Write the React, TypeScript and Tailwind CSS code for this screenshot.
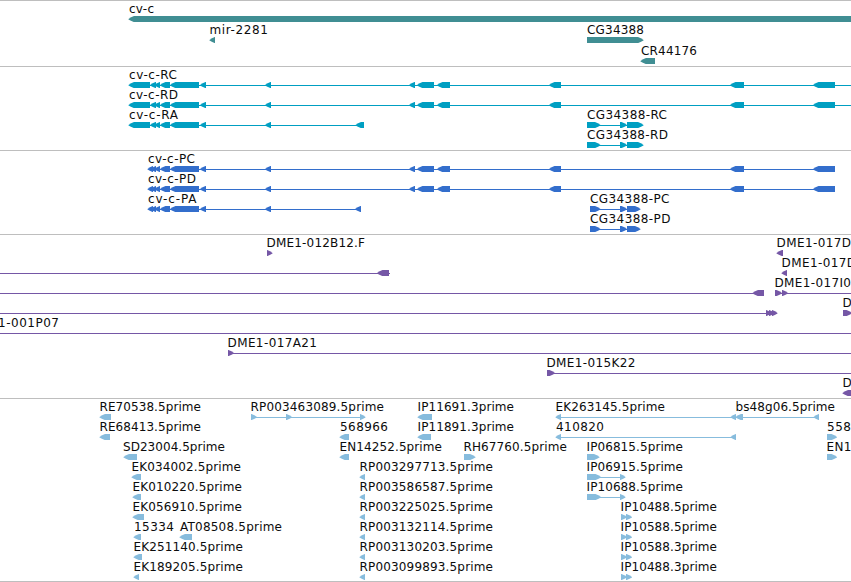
import React from "react";

type Label = [text: string, x: number, end: number];
type Arrow = [dir: "l" | "r", start: number, end: number];
interface Row {
  labels?: Label[];
  lines?: [number, number][];
  arrows?: Arrow[];
}
interface TrackData {
  name: string;
  color: string;
  height: number;
  pitch: number;
  rows: Row[];
}

const tail: Arrow[] = [
  ["l", 160, 170],
  ["l", 170, 199],
  ["l", 200, 206],
  ["l", 265, 271],
];
const distal: Arrow[] = [
  ["l", 409, 415],
  ["l", 417, 434],
  ["l", 437, 450],
  ["l", 549, 561],
  ["l", 730, 744],
  ["l", 813, 835],
];
const rnaHead: Arrow[] = [["l", 128.5, 150], ["l", 150, 156], ["l", 154.5, 160]];
const cdsHead: Arrow[] = [["l", 147.5, 153], ["l", 150.5, 156], ["l", 154.5, 160]];
const rnaShort: Arrow[] = [["r", 587, 600.5], ["r", 620, 627], ["r", 627, 643.5]];
const cdsShort: Arrow[] = [["r", 590, 600.5], ["r", 620, 627], ["r", 627, 640.5]];
const pair: Arrow[] = [["r", 621, 627], ["r", 626, 632]];

const tracks: TrackData[] = [
  {
    name: "gene",
    color: "#408e93",
    height: 65,
    pitch: 21,
    rows: [
      { labels: [["cv-c", 129, 154]], arrows: [["l", 128.5, 860]] },
      {
        labels: [["mir-2281", 209.5, 268], ["CG34388", 587, 644]],
        arrows: [["l", 209.5, 215], ["r", 587, 643.5]],
      },
      { labels: [["CR44176", 641, 697]], arrows: [["l", 640.5, 655]] },
    ],
  },
  {
    name: "transcript",
    color: "#009fc2",
    height: 83,
    pitch: 20,
    rows: [
      { labels: [["cv-c-RC", 129, 177]], lines: [[150, 851]], arrows: [...rnaHead, ...tail, ...distal] },
      { labels: [["cv-c-RD", 129, 178]], lines: [[150, 851]], arrows: [...rnaHead, ...tail, ...distal] },
      {
        labels: [["cv-c-RA", 129, 178], ["CG34388-RC", 587, 667]],
        lines: [[150, 358], [599, 628]],
        arrows: [...rnaHead, ...tail, ["l", 355.5, 364], ...rnaShort],
      },
      { labels: [["CG34388-RD", 587, 668]], lines: [[599, 628]], arrows: rnaShort },
    ],
  },
  {
    name: "cds",
    color: "#336ecc",
    height: 83,
    pitch: 20,
    rows: [
      { labels: [["cv-c-PC", 148, 195]], lines: [[150, 835]], arrows: [...cdsHead, ...tail, ...distal] },
      { labels: [["cv-c-PD", 148, 196]], lines: [[150, 835]], arrows: [...cdsHead, ...tail, ...distal] },
      {
        labels: [["cv-c-PA", 148, 196.5], ["CG34388-PC", 590, 669.5]],
        lines: [[150, 358], [599, 628]],
        arrows: [...cdsHead, ...tail, ["l", 355, 361], ...cdsShort],
      },
      { labels: [["CG34388-PD", 590, 670.5]], lines: [[599, 628]], arrows: cdsShort },
    ],
  },
  {
    name: "bac",
    color: "#7557a6",
    height: 163,
    pitch: 20,
    rows: [
      {
        labels: [["DME1-012B12.F", 266.5, 365], ["DME1-017D", 776.5, 851]],
        arrows: [["r", 267, 272.5], ["l", 776.5, 783]],
      },
      {
        labels: [["DME1-017D", 781.5, 856]],
        lines: [[0, 390]],
        arrows: [["l", 377, 389], ["l", 781.5, 787]],
      },
      {
        labels: [["DME1-017I0", 774.5, 851]],
        lines: [[0, 764], [775, 851]],
        arrows: [["l", 752.5, 764], ["r", 775, 782], ["r", 782, 788]],
      },
      {
        labels: [["D", 842.5, 852]],
        lines: [[0, 777]],
        arrows: [["r", 766, 771.5], ["r", 769, 774.5], ["r", 772, 777.5], ["r", 843, 852]],
      },
      { labels: [["1-001P07", -2, 59]], lines: [[0, 851]] },
      { labels: [["DME1-017A21", 227.5, 317]], lines: [[228, 851]], arrows: [["r", 228, 234]] },
      { labels: [["DME1-015K22", 546.5, 635.5]], lines: [[547, 851]], arrows: [["r", 547, 555]] },
      { labels: [["D", 842.5, 852]], arrows: [["l", 842.5, 856]] },
    ],
  },
  {
    name: "est",
    color: "#87bcdd",
    height: 182,
    pitch: 20,
    rows: [
      {
        labels: [
          ["RE70538.5prime", 99.5, 201],
          ["RP003463089.5prime", 250.5, 384],
          ["IP11691.3prime", 417.5, 514],
          ["EK263145.5prime", 555.5, 665],
          ["bs48g06.5prime", 735.5, 835],
        ],
        lines: [[251, 365], [556, 819]],
        arrows: [
          ["l", 99.5, 111], ["r", 251, 257], ["r", 286, 292], ["r", 360, 365.5], ["l", 417.5, 432],
          ["l", 555.5, 561], ["l", 730.5, 736], ["l", 735.5, 743], ["l", 813.5, 819],
        ],
      },
      {
        labels: [
          ["RE68413.5prime", 99.5, 201],
          ["568966", 340, 388],
          ["IP11891.3prime", 417.5, 514],
          ["410820", 556, 604],
          ["558", 827, 851],
        ],
        lines: [[556, 736]],
        arrows: [
          ["l", 99.5, 110], ["l", 339.5, 349], ["l", 417.5, 431],
          ["l", 555.5, 561], ["l", 730.5, 736], ["r", 827, 837],
        ],
      },
      {
        labels: [
          ["SD23004.5prime", 123, 225],
          ["EN14252.5prime", 339.5, 442],
          ["RH67760.5prime", 463.5, 567],
          ["IP06815.5prime", 586.5, 683],
          ["EN1", 826.5, 851.5],
        ],
        arrows: [["l", 123.5, 137], ["l", 339.5, 349], ["r", 464, 475.5], ["r", 587, 599.5], ["r", 827, 837]],
      },
      {
        labels: [["EK034002.5prime", 131.5, 241], ["RP003297713.5prime", 359.5, 493], ["IP06915.5prime", 586.5, 683]],
        lines: [[599, 625]],
        arrows: [["l", 131.5, 141], ["l", 359.5, 365], ["r", 587, 601], ["r", 620, 625.5]],
      },
      {
        labels: [["EK010220.5prime", 132.5, 242], ["RP003586587.5prime", 359.5, 493], ["IP10688.5prime", 586.5, 683]],
        lines: [[599, 625]],
        arrows: [["l", 132.5, 141], ["l", 359.5, 365], ["r", 587, 601], ["r", 620, 625.5]],
      },
      {
        labels: [["EK056910.5prime", 132.5, 242], ["RP003225025.5prime", 359.5, 493], ["IP10488.5prime", 620.5, 717]],
        arrows: [["l", 132.5, 144], ["l", 359.5, 365], ...pair],
      },
      {
        labels: [
          ["15334", 134, 174],
          ["AT08508.5prime", 180, 282],
          ["RP003132114.5prime", 359.5, 493],
          ["IP10588.5prime", 620.5, 717],
        ],
        arrows: [["l", 133.5, 141], ["l", 179.5, 192], ["l", 359.5, 365], ...pair],
      },
      {
        labels: [["EK251140.5prime", 133.5, 243], ["RP003130203.5prime", 359.5, 493], ["IP10588.3prime", 620.5, 717]],
        arrows: [["l", 133.5, 142], ["l", 359.5, 365], ...pair],
      },
      {
        labels: [["EK189205.5prime", 133.5, 243], ["RP003099893.5prime", 359.5, 493], ["IP10488.3prime", 620.5, 717]],
        arrows: [["l", 133.5, 139], ["l", 359.5, 365], ...pair],
      },
    ],
  },
];

// A feature block is 6px tall and narrows almost straight to its tip.
function arrowPoints([dir, a, b]: Arrow): string {
  const t = Math.min(5.8, b - a);
  const tip = dir === "l" ? a : b;
  const base = dir === "l" ? b : a;
  const s = dir === "l" ? 1 : -1;
  const p = (d: number, y: number) => `${tip + s * d},${y}`;
  return [
    p(0, 3),
    p(t * 0.45, 1.35),
    p(t * 0.95, 0),
    `${base},0`,
    `${base},6`,
    p(t * 0.9, 6),
    p(t * 0.42, 4.8),
    p(0, 3.5),
  ].join(" ");
}

function Track({ track }: { track: TrackData }) {
  return (
    <section className="shrink-0 border-t border-[#bebebe]" aria-label={track.name}>
      <svg width={851} height={track.height} className="block overflow-hidden">
        {track.rows.map((row, i) => (
          <g key={i} transform={`translate(0 ${15 + i * track.pitch})`} fill={track.color}>
            {row.lines?.map(([a, b], k) => (
              <rect key={k} x={a} y={3} width={b - a} height={1} />
            ))}
            {row.arrows?.map((arrow, k) => (
              <polygon key={k} points={arrowPoints(arrow)} />
            ))}
            {row.labels?.map(([text, x, end], k) => (
              <text key={k} x={x} y={-3} textLength={end - x} lengthAdjust="spacing" fill="#0c0c0c">
                {text}
              </text>
            ))}
          </g>
        ))}
      </svg>
    </section>
  );
}

export default function App() {
  return (
    <main className="flex h-[582px] w-[851px] flex-col overflow-hidden border-b border-[#bebebe] bg-white font-['DejaVu_Sans',sans-serif] text-[12px] font-normal">
      {tracks.map((track) => (
        <Track key={track.name} track={track} />
      ))}
    </main>
  );
}
